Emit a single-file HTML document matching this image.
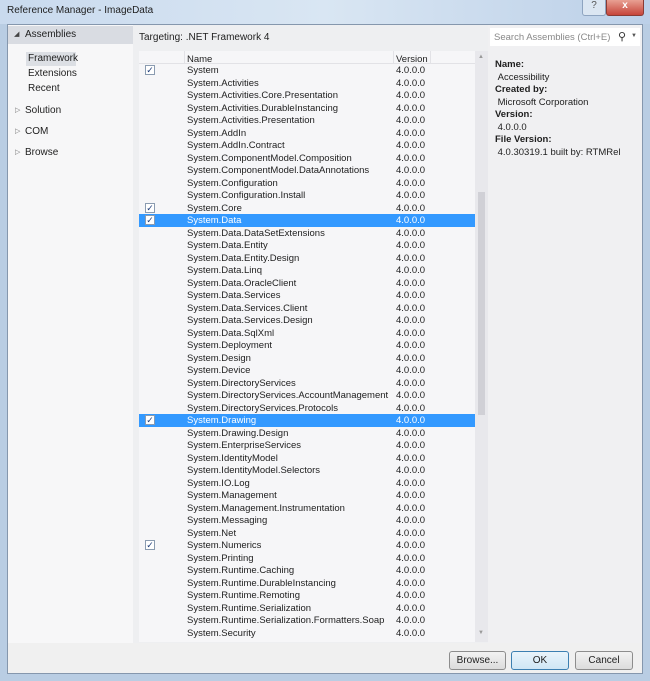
<!DOCTYPE html>
<html><head><style>
*{margin:0;padding:0;box-sizing:border-box}
body{width:650px;height:681px;position:relative;overflow:hidden;font-family:"Liberation Sans",sans-serif;font-size:9.5px;color:#1e1e1e;background:#b9cde3}
.a{position:absolute}
.row{position:absolute;left:139px;width:336px;height:12.5px;line-height:12.5px}
.row .n{position:absolute;left:48px;top:1px}
.row .v{position:absolute;left:257px;top:1px}
.row .c{position:absolute;left:6px;top:1px;width:10px;height:10px;border:1px solid #8a9bb0;background:#fff;font-size:9px;line-height:8px;text-align:center;color:#1f3d7a}
.sel{background:#3399ff;color:#fff}
.btn{position:absolute;top:651px;height:19px;border:1px solid #8d8d8d;border-radius:3px;background:linear-gradient(#f2f2f2,#dcdcdc);text-align:center;line-height:17px;font-size:10px}
</style></head><body>
<div class="a" style="left:0;top:0;width:650px;height:24px;background:linear-gradient(90deg,#c9daee,#d9e6f3 50%,#bcd0e8)"></div>
<div class="a" style="left:7px;top:5px;font-size:10px">Reference Manager - ImageData</div>
<div class="a" style="left:582px;top:0;width:24px;height:16px;border:1px solid #8ea4c0;border-top:0;border-radius:0 0 3px 3px;background:#dbe6f2;text-align:center;font-size:10px;color:#555">?</div>
<div class="a" style="left:606px;top:0;width:38px;height:16px;border:1px solid #8a3b34;border-top:0;border-radius:0 0 3px 3px;background:linear-gradient(#e8a093,#c6453a);color:#fff;text-align:center;font-weight:bold;font-size:10px">x</div>
<div class="a" style="left:7px;top:24px;width:636px;height:650px;background:#f0f0f0;border:1px solid #8597ad"></div>
<div class="a" style="left:8px;top:25px;width:125px;height:618px;background:#f7f7f8"></div>
<div class="a" style="left:8px;top:26px;width:125px;height:18px;background:#d9dce2"></div>
<div class="a" style="left:14px;top:30px;font-size:7px;color:#444">◢</div>
<div class="a" style="left:25px;top:29px;font-size:10px">Assemblies</div>
<div class="a" style="left:26px;top:52px;width:50px;height:14px;background:#dcdfe4"></div>
<div class="a" style="left:28px;top:53px;font-size:10px">Framework</div>
<div class="a" style="left:28px;top:68px;font-size:10px">Extensions</div>
<div class="a" style="left:28px;top:83px;font-size:10px">Recent</div>
<div class="a" style="left:15px;top:106px;font-size:7px;color:#777">▷</div>
<div class="a" style="left:25px;top:105px;font-size:10px">Solution</div>
<div class="a" style="left:15px;top:127px;font-size:7px;color:#777">▷</div>
<div class="a" style="left:25px;top:126px;font-size:10px">COM</div>
<div class="a" style="left:15px;top:148px;font-size:7px;color:#777">▷</div>
<div class="a" style="left:25px;top:147px;font-size:10px">Browse</div>
<div class="a" style="left:133px;top:25px;width:355px;height:618px;background:#eeeff1"></div>
<div class="a" style="left:139px;top:32px;font-size:10px">Targeting: .NET Framework 4</div>
<div class="a" style="left:139px;top:51px;width:336px;height:591px;background:#f6f6f8"></div>
<div class="a" style="left:139px;top:51px;width:336px;height:13px;background:#f6f6f8;border-bottom:1px solid #e2e2e6"></div>
<div class="a" style="left:184px;top:51px;width:1px;height:13px;background:#e2e2e6"></div>
<div class="a" style="left:393px;top:51px;width:1px;height:13px;background:#e2e2e6"></div>
<div class="a" style="left:430px;top:51px;width:1px;height:13px;background:#e2e2e6"></div>
<div class="a" style="left:187px;top:54px">Name</div>
<div class="a" style="left:396px;top:54px">Version</div>
<div class="a" style="left:475px;top:51px;width:13px;height:591px;background:#e8e8ec"></div>
<div class="a" style="left:478px;top:192px;width:7px;height:223px;background:#d0d0d6"></div>
<div class="a" style="left:478px;top:54px;font-size:6px;color:#999">▲</div>
<div class="a" style="left:478px;top:630px;font-size:6px;color:#999">▼</div>
<div id="rows"></div>
<div class="a" style="left:488px;top:25px;width:154px;height:618px;background:#f0f0f2"></div>
<div class="a" style="left:490px;top:28px;width:150px;height:18px;background:#fff"></div>
<div class="a" style="left:494px;top:32px;color:#888">Search Assemblies (Ctrl+E)</div>
<div class="a" style="left:618px;top:30px;font-size:11px;color:#333">⚲</div>
<div class="a" style="left:631px;top:33px;font-size:6px;color:#555">▼</div>
<div class="a" style="left:495px;top:59px;line-height:12.5px">
<b>Name:</b><br>&nbsp;Accessibility<br><b>Created by:</b><br>&nbsp;Microsoft Corporation<br><b>Version:</b><br>&nbsp;4.0.0.0<br><b>File Version:</b><br>&nbsp;4.0.30319.1 built by: RTMRel</div>
<div class="btn" style="left:449px;width:57px">Browse...</div>
<div class="btn" style="left:511px;width:58px;border-color:#3c7fb1;background:linear-gradient(#e9f4fb,#cfe6f5)">OK</div>
<div class="btn" style="left:575px;width:58px">Cancel</div>
<script>
var n=["System","System.Activities","System.Activities.Core.Presentation","System.Activities.DurableInstancing","System.Activities.Presentation","System.AddIn","System.AddIn.Contract","System.ComponentModel.Composition","System.ComponentModel.DataAnnotations","System.Configuration","System.Configuration.Install","System.Core","System.Data","System.Data.DataSetExtensions","System.Data.Entity","System.Data.Entity.Design","System.Data.Linq","System.Data.OracleClient","System.Data.Services","System.Data.Services.Client","System.Data.Services.Design","System.Data.SqlXml","System.Deployment","System.Design","System.Device","System.DirectoryServices","System.DirectoryServices.AccountManagement","System.DirectoryServices.Protocols","System.Drawing","System.Drawing.Design","System.EnterpriseServices","System.IdentityModel","System.IdentityModel.Selectors","System.IO.Log","System.Management","System.Management.Instrumentation","System.Messaging","System.Net","System.Numerics","System.Printing","System.Runtime.Caching","System.Runtime.DurableInstancing","System.Runtime.Remoting","System.Runtime.Serialization","System.Runtime.Serialization.Formatters.Soap","System.Security"];
var chk=[0,11,12,28,38],sel=[12,28],h="";
n.forEach(function(s,i){h+='<div class="row'+(sel.indexOf(i)>=0?' sel':'')+'" style="top:'+(64+i*12.5)+'px">'+(chk.indexOf(i)>=0?'<span class="c">✓</span>':'')+'<span class="n">'+s+'</span><span class="v">4.0.0.0</span></div>'});
document.getElementById("rows").innerHTML=h;
</script>
</body></html>
